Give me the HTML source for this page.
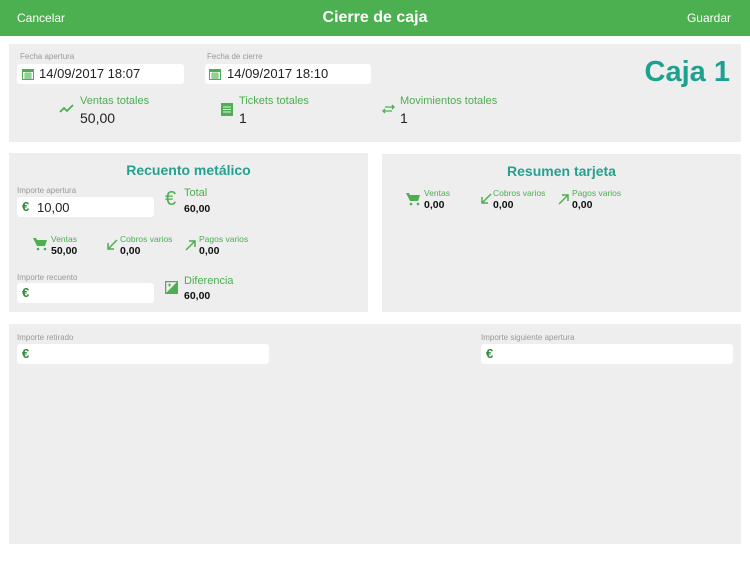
<!DOCTYPE html>
<html><head><meta charset="utf-8"><style>
*{margin:0;padding:0;box-sizing:border-box}
body{width:750px;height:562px;background:#fff;font-family:"Liberation Sans",sans-serif;position:relative;overflow:hidden}
.a{position:absolute}
.hdr{left:0;top:0;width:750px;height:36px;background:#4caf50;color:#fff}
.p{background:#eeeeee}
.lbl{font-size:8px;color:#999;position:absolute}
.inp{position:absolute;background:#fff;border-radius:3px;height:20px}
.g{color:#4caf50}
.eur{position:absolute;left:5px;top:2px;font-size:13px;font-weight:bold;color:#2e8b3a}
.t{color:#26a08f;font-weight:bold;font-size:14px;position:absolute;text-align:center}
.sl{font-size:8.5px;color:#4caf50;position:absolute}
.sv{font-size:10.5px;font-weight:bold;color:#111;position:absolute}
</style></head><body>
<div class="a hdr">
<div class="a" style="left:17px;top:11px;font-size:12px">Cancelar</div>
<div class="a" style="left:0;width:750px;top:9px;text-align:center;font-size:16px;font-weight:bold">Cierre de caja</div>
<div class="a" style="right:19px;top:11px;font-size:12px">Guardar</div>
</div>

<div class="a p" style="left:9px;top:44px;width:732px;height:98px"></div>
<div class="lbl" style="left:20px;top:52px">Fecha apertura</div>
<div class="inp" style="left:17px;top:64px;width:167px"><svg class="a" style="left:5px;top:4px" width="12" height="12" viewBox="0 0 12 12"><rect x="0.5" y="1.5" width="11" height="10" fill="none" stroke="#4caf50"/><rect x="0.5" y="1.5" width="11" height="2.5" fill="#4caf50"/><path d="M2 6h8M2 8h8M2 10h8M4 4v7M6 4v7M8 4v7" stroke="#4caf50" stroke-width=".7"/></svg><span class="a" style="left:22px;top:2px;font-size:13px;color:#222">14/09/2017 18:07</span></div>
<div class="lbl" style="left:207px;top:52px">Fecha de cierre</div>
<div class="inp" style="left:205px;top:64px;width:166px"><svg class="a" style="left:4px;top:4px" width="12" height="12" viewBox="0 0 12 12"><rect x="0.5" y="1.5" width="11" height="10" fill="none" stroke="#4caf50"/><rect x="0.5" y="1.5" width="11" height="2.5" fill="#4caf50"/><path d="M2 6h8M2 8h8M2 10h8M4 4v7M6 4v7M8 4v7" stroke="#4caf50" stroke-width=".7"/></svg><span class="a" style="left:22px;top:2px;font-size:13px;color:#222">14/09/2017 18:10</span></div>
<div class="a" style="right:20px;top:56px;font-size:29px;font-weight:bold;color:#1fa18f">Caja 1</div>

<svg class="a" style="left:59px;top:104px" width="16" height="10" viewBox="0 0 16 10"><path d="M1 8l4-4 3 3 6-6" stroke="#4caf50" stroke-width="1.8" fill="none"/></svg>
<div class="a g" style="left:80px;top:95px;font-size:11px">Ventas totales</div>
<div class="a" style="left:80px;top:110px;font-size:14px;color:#222">50,00</div>
<svg class="a" style="left:221px;top:103px" width="12" height="13" viewBox="0 0 12 13"><rect width="12" height="13" fill="#4caf50"/><path d="M2 4h8M2 6.5h8M2 9h8" stroke="#eee" stroke-width="1"/></svg>
<div class="a g" style="left:239px;top:95px;font-size:11px">Tickets totales</div>
<div class="a" style="left:239px;top:110px;font-size:14px;color:#222">1</div>
<svg class="a" style="left:382px;top:104px" width="13" height="10" viewBox="0 0 13 10"><path d="M3 3h9M10 1l2 2-2 2M10 7H1M3 5L1 7l2 2" stroke="#4caf50" stroke-width="1.3" fill="none"/></svg>
<div class="a g" style="left:400px;top:95px;font-size:11px">Movimientos totales</div>
<div class="a" style="left:400px;top:110px;font-size:14px;color:#222">1</div>

<div class="a p" style="left:9px;top:153px;width:359px;height:159px"></div>
<div class="t" style="left:9px;width:359px;top:162px">Recuento metálico</div>
<div class="lbl" style="left:17px;top:186px">Importe apertura</div>
<div class="inp" style="left:17px;top:197px;width:137px"><span class="eur">€</span><span class="a" style="left:20px;top:3px;font-size:13px;color:#222">10,00</span></div>
<div class="a g" style="left:165px;top:188px;font-size:20px">€</div>
<div class="a g" style="left:184px;top:187px;font-size:11px">Total</div>
<div class="sv" style="left:184px;top:203px">60,00</div>

<svg class="a" style="left:33px;top:237px" width="15" height="14" viewBox="0 0 15 14"><path d="M0 1h3l1 2h10l-2 6H4z" fill="#4caf50"/><circle cx="5" cy="12" r="1.3" fill="#4caf50"/><circle cx="12" cy="12" r="1.3" fill="#4caf50"/></svg>
<div class="sl" style="left:51px;top:234px">Ventas</div>
<div class="sv" style="left:51px;top:245px">50,00</div>
<svg class="a" style="left:106px;top:239px" width="12" height="12" viewBox="0 0 12 12"><path d="M11 1L2 10M2 4v6h6" stroke="#4caf50" stroke-width="1.5" fill="none"/></svg>
<div class="sl" style="left:120px;top:234px">Cobros varios</div>
<div class="sv" style="left:120px;top:245px">0,00</div>
<svg class="a" style="left:185px;top:239px" width="12" height="12" viewBox="0 0 12 12"><path d="M1 11l9-9M4 2h6v6" stroke="#4caf50" stroke-width="1.5" fill="none"/></svg>
<div class="sl" style="left:199px;top:234px">Pagos varios</div>
<div class="sv" style="left:199px;top:245px">0,00</div>

<div class="lbl" style="left:17px;top:273px">Importe recuento</div>
<div class="inp" style="left:17px;top:283px;width:137px"><span class="eur">€</span></div>
<svg class="a" style="left:165px;top:281px" width="13" height="13" viewBox="0 0 13 13"><rect x="0.5" y="0.5" width="12" height="12" fill="none" stroke="#4caf50" stroke-width="1.5"/><path d="M1 12L12 1V12z" fill="#4caf50"/><path d="M3 4h3M4.5 2.5v3" stroke="#4caf50"/></svg>
<div class="a g" style="left:184px;top:275px;font-size:11px">Diferencia</div>
<div class="sv" style="left:184px;top:290px">60,00</div>

<div class="a p" style="left:382px;top:154px;width:359px;height:158px"></div>
<div class="t" style="left:382px;width:359px;top:163px">Resumen tarjeta</div>
<svg class="a" style="left:406px;top:192px" width="15" height="14" viewBox="0 0 15 14"><path d="M0 1h3l1 2h10l-2 6H4z" fill="#4caf50"/><circle cx="5" cy="12" r="1.3" fill="#4caf50"/><circle cx="12" cy="12" r="1.3" fill="#4caf50"/></svg>
<div class="sl" style="left:424px;top:188px">Ventas</div>
<div class="sv" style="left:424px;top:199px">0,00</div>
<svg class="a" style="left:480px;top:193px" width="12" height="12" viewBox="0 0 12 12"><path d="M11 1L2 10M2 4v6h6" stroke="#4caf50" stroke-width="1.5" fill="none"/></svg>
<div class="sl" style="left:493px;top:188px">Cobros varios</div>
<div class="sv" style="left:493px;top:199px">0,00</div>
<svg class="a" style="left:558px;top:193px" width="12" height="12" viewBox="0 0 12 12"><path d="M1 11l9-9M4 2h6v6" stroke="#4caf50" stroke-width="1.5" fill="none"/></svg>
<div class="sl" style="left:572px;top:188px">Pagos varios</div>
<div class="sv" style="left:572px;top:199px">0,00</div>

<div class="a p" style="left:9px;top:324px;width:732px;height:220px"></div>
<div class="lbl" style="left:17px;top:333px">Importe retirado</div>
<div class="inp" style="left:17px;top:344px;width:252px"><span class="eur">€</span></div>
<div class="lbl" style="left:481px;top:333px">Importe siguiente apertura</div>
<div class="inp" style="left:481px;top:344px;width:252px"><span class="eur">€</span></div>
</body></html>
